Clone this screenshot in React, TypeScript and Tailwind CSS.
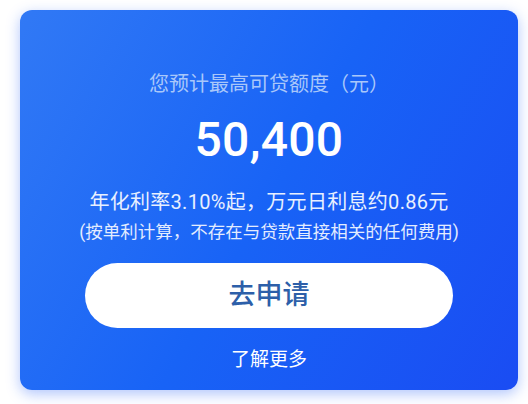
export default function App() {
  return (
    <div className="w-[528px] h-[404px] bg-white pt-[10px] pl-[20px] font-['Roboto','Noto_Sans_CJK_SC',sans-serif]">
      {/* loan card */}
      <div className="w-[498px] h-[380px] rounded-[12px] bg-[linear-gradient(120deg,#3179f5_0%,#1863f6_50%,#1a4cf3_100%)] shadow-[0_4px_14px_rgba(30,90,245,0.35)] flex flex-col items-center pt-[62px]">
        <p className="text-[20px] leading-[24px] text-[#a9c7fa]">您预计最高可贷额度（元）</p>

        <p className="mt-[16px] text-[48px] leading-[56px] font-medium text-white tracking-[0.3px]">50,400</p>

        <p className="mt-[22px] text-[20px] leading-[24px] text-[#e8f0ff] tracking-[0.3px]">
          年化利率3.10%起，万元日利息约0.86元
        </p>
        <p className="mt-[6px] text-[17.5px] leading-[24px] text-[#e3ecff]">
          (按单利计算，不存在与贷款直接相关的任何费用)
        </p>

        <button className="mt-[19px] w-[368px] h-[65px] rounded-full bg-white text-[27px] text-[#2d5fa9] font-medium flex items-center justify-center">
          去申请
        </button>

        <p className="mt-[20px] text-[19px] leading-[24px] text-white">了解更多</p>
      </div>
    </div>
  )
}
